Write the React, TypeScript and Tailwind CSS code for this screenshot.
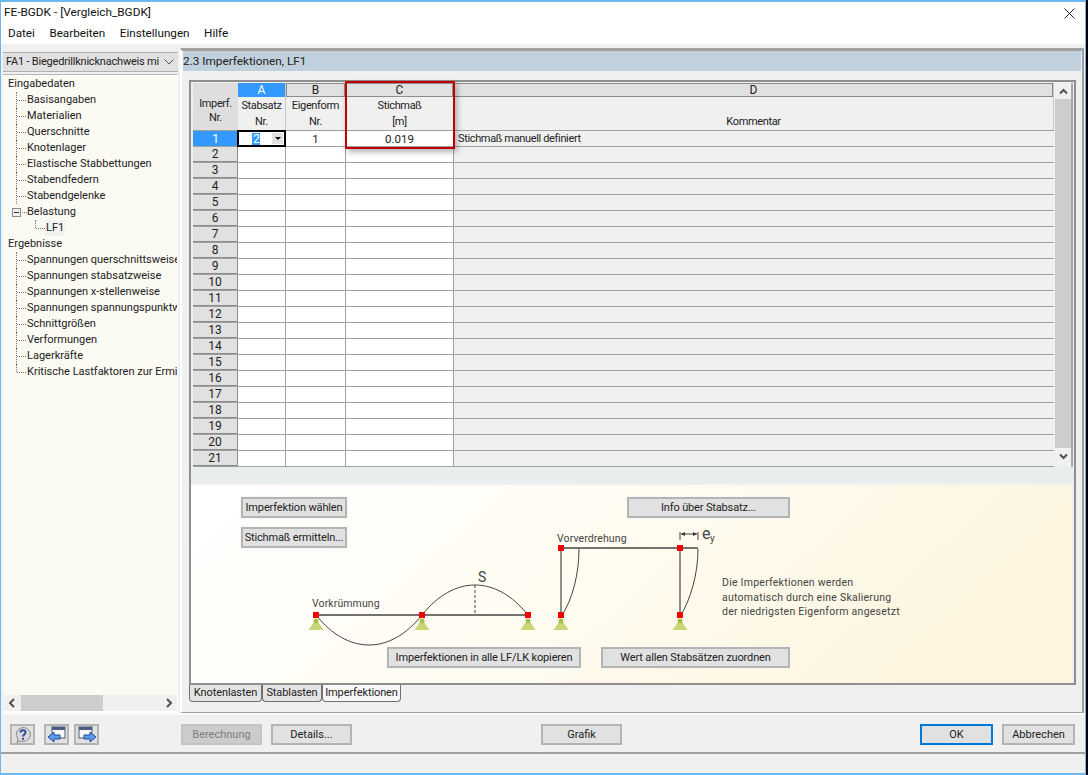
import React from "react";

const font = "font-['Roboto','Liberation_Sans',sans-serif]";

function Tree() {
  const Child = ({ t, last }: { t: string; last?: boolean }) => (
    <div className="flex h-4 items-stretch pl-[8px]">
      <span className={`relative w-[11px] shrink-0 border-l border-dotted border-[#777] ${last ? "h-2" : ""}`}>
        <span className="absolute left-0 top-2 w-[9px] border-t border-dotted border-[#777]" />
      </span>
      <span className="whitespace-nowrap leading-4">{t}</span>
    </div>
  );
  return (
    <div className="flex-1 overflow-hidden bg-[#fbfaf3] pl-[5px] pt-[1px] text-[11px] text-[#222]">
      <div className="h-4 leading-4">Eingabedaten</div>
      {["Basisangaben", "Materialien", "Querschnitte", "Knotenlager", "Elastische Stabbettungen", "Stabendfedern"].map((t) => (
        <Child key={t} t={t} />
      ))}
      <Child t="Stabendgelenke" />
      <div className="flex h-4 items-center pl-[4px]">
        <span className="relative mr-[1px] flex h-[9px] w-[9px] items-center justify-center border border-[#8a8a8a] bg-[#f0f0f0]">
          <span className="h-px w-[5px] bg-[#333]" />
        </span>
        <span className="w-[5px] border-t border-dotted border-[#777]" />
        <span className="leading-4">Belastung</span>
      </div>
      <div className="flex h-4 items-stretch pl-[27px]">
        <span className="relative h-2 w-[10px] shrink-0 border-l border-dotted border-[#777]">
          <span className="absolute left-0 top-2 w-[9px] border-t border-dotted border-[#777]" />
        </span>
        <span className="bg-[#f2f2f0] px-[1px] leading-4">LF1</span>
      </div>
      <div className="h-4 leading-4">Ergebnisse</div>
      {[
        "Spannungen querschnittsweise",
        "Spannungen stabsatzweise",
        "Spannungen x-stellenweise",
        "Spannungen spannungspunktweise",
        "Schnittgrößen",
        "Verformungen",
        "Lagerkräfte",
      ].map((t) => (
        <Child key={t} t={t} />
      ))}
      <Child t="Kritische Lastfaktoren zur Ermittlung" last />
    </div>
  );
}

function Chevron({ up }: { up?: boolean }) {
  return (
    <svg width="9" height="7" viewBox="0 0 9 7" className={up ? "" : "rotate-180"}>
      <path d="M1 5.5 L4.5 2 L8 5.5" fill="none" stroke="#505050" strokeWidth="2" />
    </svg>
  );
}

function Grid() {
  const rows = Array.from({ length: 21 }, (_, i) => i + 1);
  return (
    <div className="relative flex h-[387px] border-2 border-b-0 border-[#8f8f8f] bg-[#f0f0f0] pl-[2px] pt-[1px] text-[11px] leading-4 tracking-[-0.35px] text-[#222]">
      <div className="w-[861px]">
        <div className="grid h-[48px] grid-cols-[45px_48px_60px_108px_600px] grid-rows-[47px] border-b border-[#a0a0a0]">
          <div className="flex flex-col items-center justify-center bg-[#dedede] pt-[9px] leading-[14px]">
            <span>Imperf.</span>
            <span>Nr.</span>
          </div>
          {[
            ["A", "Stabsatz", "Nr."],
            ["B", "Eigenform", "Nr."],
            ["C", "Stichmaß", "[m]"],
            ["D", "", "Kommentar"],
          ].map(([l, a, b]) => (
            <div key={l} className="flex flex-col border-r border-[#c8c8c8]">
              <div
                className={`flex h-[14px] items-center justify-center text-[12px] tracking-normal ${
                  l === "A" ? "bg-[#3399ff] text-white" : "border border-[#8c8c8c] bg-[#e1e1e1]"
                }`}
              >
                {l}
              </div>
              <div className="flex flex-1 flex-col items-center pt-[1px]">
                <span className="h-4">{a}</span>
                <span className="h-4">{b}</span>
              </div>
            </div>
          ))}
        </div>
        {rows.map((n) => (
          <div key={n} className="grid h-4 grid-cols-[45px_48px_60px_108px_600px] grid-rows-[15px] border-b border-[#a0a0a0]">
            <div
              className={`flex items-center justify-center text-[12px] tracking-normal ${
                n === 1 ? "bg-[#3399ff] text-white" : "border-r border-b border-[#8c8c8c] bg-[#e1e1e1]"
              }`}
            >
              {n}
            </div>
            <div className="relative border-r border-[#a0a0a0] bg-white">
              {n === 1 && (
                <div className="absolute inset-[-1px] flex items-center border-2 border-black bg-white pl-[13px]">
                  <span className="bg-[#3399ff] px-[1px] text-[12px] leading-3 text-white">2</span>
                  <span className="ml-auto mr-[1px] flex h-[11px] w-[11px] items-center justify-center bg-[#e1e1e1]">
                    <span className="h-0 w-0 border-x-[3px] border-t-[3px] border-x-transparent border-t-black" />
                  </span>
                </div>
              )}
            </div>
            <div className="flex items-center justify-center border-r border-[#a0a0a0] bg-white text-[11.5px] tracking-normal">{n === 1 ? "1" : ""}</div>
            <div className="flex items-center justify-center border-r border-[#a0a0a0] bg-white text-[11.5px] tracking-normal">{n === 1 ? "0.019" : ""}</div>
            <div className="flex items-center pl-[4px]">{n === 1 ? "Stichmaß manuell definiert" : ""}</div>
          </div>
        ))}
      </div>
      <div className="ml-[1px] flex w-[16px] flex-col bg-[#f0f0f0]">
        <div className="flex h-[16px] shrink-0 items-center justify-center">
          <Chevron up />
        </div>
        <div className="h-[349px] shrink-0 bg-[#cdcdcd]" />
        <div className="flex h-[17px] shrink-0 items-center justify-center">
          <Chevron />
        </div>
      </div>
      <div className="w-[2px] bg-[#a8a8a8]" />
      <div className="pointer-events-none absolute left-[154px] top-[-1px] h-[68px] w-[110px] border-2 border-[#c00000] shadow-[2px_3px_6px_rgba(0,0,0,0.3)]" />
    </div>
  );
}

function CanvasButton({ className, children }: { className: string; children: React.ReactNode }) {
  return (
    <div
      className={`absolute flex items-center justify-center whitespace-nowrap border-2 border-[#b4b4b4] bg-[#e1e1e1] pt-[1px] text-[11px] tracking-[-0.15px] text-[#222] outline outline-1 outline-[#f8f8f4] ${className}`}
    >
      {children}
    </div>
  );
}

function Support({ x, y }: { x: number; y: number }) {
  return (
    <g>
      <path d={`M${x} ${y + 4} L${x + 7.5} ${y + 15} L${x - 7.5} ${y + 15} Z`} fill="#c8d676" />
      <circle cx={x} cy={y + 6} r="2.5" fill="#a9bf4e" />
      <rect x={x - 3} y={y - 3} width="6" height="6" fill="#f00000" />
    </g>
  );
}

function Diagram() {
  return (
    <svg width="881" height="199" viewBox="191 485 881 199" className="absolute inset-0">
      <defs>
        <linearGradient id="cream" x1="0" y1="0" x2="1" y2="0.25">
          <stop offset="0" stopColor="#ffffff" />
          <stop offset="0.45" stopColor="#fffcf3" />
          <stop offset="1" stopColor="#fdf5df" />
        </linearGradient>
      </defs>
      <rect x="191" y="485" width="881" height="199" fill="url(#cream)" />
      <g fill="none" stroke="#444" strokeWidth="1">
        <path d="M316 615 C348 655 390 655 422 615" />
        <path d="M422 615 C454 575 496 575 528 615" />
        <path d="M475 585 V615" strokeDasharray="3 2" />
        <path d="M579 549 C579 575 572 600 562 615" />
        <path d="M698 549 C698 575 690 600 681 615" />
        <path d="M698 532 V540 M680 532 V540" />
        <path d="M681 534 H697" />
      </g>
      <path d="M316 615 H528" stroke="#444" strokeWidth="1.4" />
      <path d="M561 548 H698" stroke="#444" strokeWidth="1.4" />
      <path d="M561 548 V615 M680 548 V615" stroke="#8f8f88" strokeWidth="2" />
      <path d="M681 534 l4 -2 v4 Z M697 534 l-4 -2 v4 Z" fill="#333" />
      <Support x={316} y={615} />
      <Support x={422} y={615} />
      <Support x={528} y={615} />
      <Support x={561} y={615} />
      <Support x={680} y={615} />
      <rect x="558" y="545" width="6" height="6" fill="#f00000" />
      <rect x="677" y="545" width="6" height="6" fill="#f00000" />
      <text x="312" y="607" fontSize="10.5" fill="#444" letterSpacing="0.1">Vorkrümmung</text>
      <text x="557" y="542" fontSize="10.5" fill="#444" letterSpacing="0.1">Vorverdrehung</text>
      <text x="478" y="582" fontSize="14" fill="#444">S</text>
      <text x="702" y="539" fontSize="16" fill="#444">e</text>
      <text x="710" y="542" fontSize="10" fill="#444">y</text>
    </svg>
  );
}

function Tabs() {
  const tab = "flex h-[17px] items-center justify-center rounded-b-[4px] border border-t-0 border-[#707070] pt-[1px]";
  return (
    <div className="flex h-[27px] items-start bg-[#f0f0f0] text-[11px] tracking-[-0.1px] text-[#222]">
      <div className={`${tab} w-[73px] bg-[#e4e4e4]`}>Knotenlasten</div>
      <div className={`${tab} w-[60px] bg-[#e4e4e4]`}>Stablasten</div>
      <div className={`${tab} mt-[-1px] h-[18px] w-[79px] bg-[#f7f7f7]`}>Imperfektionen</div>
    </div>
  );
}

function Btn({ className, children }: { className: string; children: React.ReactNode }) {
  return <div className={`flex h-[21px] items-center justify-center border-2 pt-[1px] text-[11px] ${className}`}>{children}</div>;
}

function IconBtn({ children }: { children: React.ReactNode }) {
  return <div className="flex h-[21px] w-[25px] items-center justify-center border-2 border-[#b4b4b4] bg-[#e1e1e1]">{children}</div>;
}

export default function App() {
  return (
    <div className={`flex h-[775px] w-[1088px] overflow-hidden bg-black ${font}`}>
      <div className="flex h-full w-[1086px] flex-col border-x border-y-2 border-[#6db9ef] bg-[#f0f0f0]">
        <div className="flex h-[22px] shrink-0 items-center justify-between bg-white pl-[3px] pr-[10px] text-[11.8px] text-[#111]">
          <span>FE-BGDK - [Vergleich_BGDK]</span>
          <svg width="11" height="11" viewBox="0 0 11 11">
            <path d="M0.5 0.5 L10.5 10.5 M10.5 0.5 L0.5 10.5" stroke="#222" strokeWidth="1" />
          </svg>
        </div>
        <div className="flex h-[20px] shrink-0 items-center gap-[14.5px] bg-white pl-[7px] text-[11.7px] text-[#111]">
          <span>Datei</span>
          <span>Bearbeiten</span>
          <span>Einstellungen</span>
          <span>Hilfe</span>
        </div>
        <div className="flex h-[669px] shrink-0 pl-[2px] pt-[4px]">
          <div className="flex w-[175px] shrink-0 flex-col pt-[4px]">
            <div className="flex h-[20px] shrink-0 items-center justify-between border-y border-[#b0b0b0] bg-[#e1e1e1] pl-[3px] pr-[4px] text-[11px] tracking-[-0.2px] text-[#222]">
              <span className="whitespace-nowrap">FA1 - Biegedrillknicknachweis mi</span>
              <svg width="10" height="6" viewBox="0 0 10 6" className="shrink-0">
                <path d="M0.5 0.5 L5 5 L9.5 0.5" fill="none" stroke="#555" />
              </svg>
            </div>
            <div className="mt-[2px] flex min-h-0 flex-1 flex-col border-t border-r border-b-2 border-[#b5b5b5] border-r-white border-b-white">
              <Tree />
              <div className="flex h-[16px] shrink-0 items-center bg-[#f0f0f0]">
                <svg width="18" height="16" viewBox="0 0 18 16" className="shrink-0">
                  <path d="M11 4 L7 8 L11 12" fill="none" stroke="#505050" strokeWidth="2" />
                </svg>
                <div className="h-full w-[82px] bg-[#cdcdcd]" />
                <div className="flex-1" />
                <svg width="18" height="16" viewBox="0 0 18 16" className="shrink-0">
                  <path d="M8 4 L12 8 L8 12" fill="none" stroke="#505050" strokeWidth="2" />
                </svg>
              </div>
            </div>
          </div>
          <div className="ml-[2px] flex w-[904px] flex-col border-t-[3px] border-r-2 border-b border-l-2 border-[#a0a0a0] border-l-white">
            <div className="mx-[1px] flex h-[20px] shrink-0 items-center bg-[#c0d0dc] pt-[1px] text-[11.8px] text-[#222]">
              2.3 Imperfektionen, LF1
            </div>
            <div className="ml-[7px] mr-[6px] mt-[9px] flex flex-col">
              <Grid />
              <div className="h-[16px] border-x-2 border-[#8f8f8f] bg-[#e8eeee]" />
              <div className="relative h-[202px] border-x-2 border-b-2 border-[#8f8f8f] bg-[#f0f0f0] pt-[2px]">
                <div className="relative h-[198px] overflow-hidden">
                  <Diagram />
                  <CanvasButton className="left-[50px] top-[12px] h-[21px] w-[106px]">Imperfektion wählen</CanvasButton>
                  <CanvasButton className="left-[50px] top-[42px] h-[21px] w-[106px]">Stichmaß ermitteln...</CanvasButton>
                  <CanvasButton className="left-[436px] top-[12px] h-[21px] w-[163px]">Info über Stabsatz...</CanvasButton>
                  <CanvasButton className="left-[196px] top-[162px] h-[21px] w-[194px]">Imperfektionen in alle LF/LK kopieren</CanvasButton>
                  <CanvasButton className="left-[410px] top-[162px] h-[21px] w-[189px]">Wert allen Stabsätzen zuordnen</CanvasButton>
                  <div className="absolute left-[531px] top-[91px] whitespace-nowrap text-[10.5px] leading-[14.5px] tracking-[0.25px] text-[#444]">
                    Die Imperfektionen werden
                    <br />
                    automatisch durch eine Skalierung
                    <br />
                    der niedrigsten Eigenform angesetzt
                  </div>
                </div>
              </div>
              <Tabs />
            </div>
          </div>
        </div>
        <div className="flex h-[39px] shrink-0 items-center border-t-2 border-[#fbfbfb] pt-[2px] pl-[9px] pr-[9px] text-[#222]">
          <IconBtn>
            <svg width="18" height="18" viewBox="0 0 18 18">
              <path d="M9 1.5 a7.5 7 0 1 1 -3 13.4 L3 17 L4 13 A7.5 7 0 0 1 9 1.5 Z" fill="#d9d9d9" stroke="#8a8a8a" />
              <path d="M6.5 6.5 C6.5 3.5 11.5 3.5 11.5 6.5 C11.5 8.5 9 8.5 9 10.5" fill="none" stroke="#2c4f9e" strokeWidth="2" />
              <rect x="8" y="11.8" width="2" height="2" fill="#2c4f9e" />
            </svg>
          </IconBtn>
          <div className="ml-[9px]">
            <IconBtn>
              <svg width="20" height="18" viewBox="0 0 20 18">
                <rect x="5" y="1" width="13" height="11" fill="#f4f6fa" stroke="#4a5f80" />
                <rect x="5" y="1" width="13" height="3" fill="#4a5f80" />
                <path d="M1 11 L7 6 V9 H13 V13 H7 V16 Z" fill="#5b9bea" stroke="#1f4f9e" />
              </svg>
            </IconBtn>
          </div>
          <div className="ml-[5px]">
            <IconBtn>
              <svg width="20" height="18" viewBox="0 0 20 18">
                <rect x="2" y="1" width="13" height="11" fill="#f4f6fa" stroke="#4a5f80" />
                <rect x="2" y="1" width="13" height="3" fill="#4a5f80" />
                <path d="M19 11 L13 6 V9 H7 V13 H13 V16 Z" fill="#5b9bea" stroke="#1f4f9e" />
              </svg>
            </IconBtn>
          </div>
          <Btn className="ml-[82px] w-[81px] border-[#c4c4c4] bg-[#cccccc] text-[#7d7d7d]">Berechnung</Btn>
          <Btn className="ml-[9px] w-[81px] border-[#b4b4b4] bg-[#e1e1e1]">Details...</Btn>
          <Btn className="ml-[189px] w-[81px] border-[#b4b4b4] bg-[#e1e1e1]">Grafik</Btn>
          <Btn className="ml-[298px] w-[73px] border-[#0078d7] bg-[#e1e1e1]">OK</Btn>
          <Btn className="ml-[9px] w-[73px] border-[#b4b4b4] bg-[#e1e1e1]">Abbrechen</Btn>
        </div>
        <div className="flex-1 border-t-2 border-[#a0a0a0] bg-[#f0f0f0]" />
      </div>
    </div>
  );
}
